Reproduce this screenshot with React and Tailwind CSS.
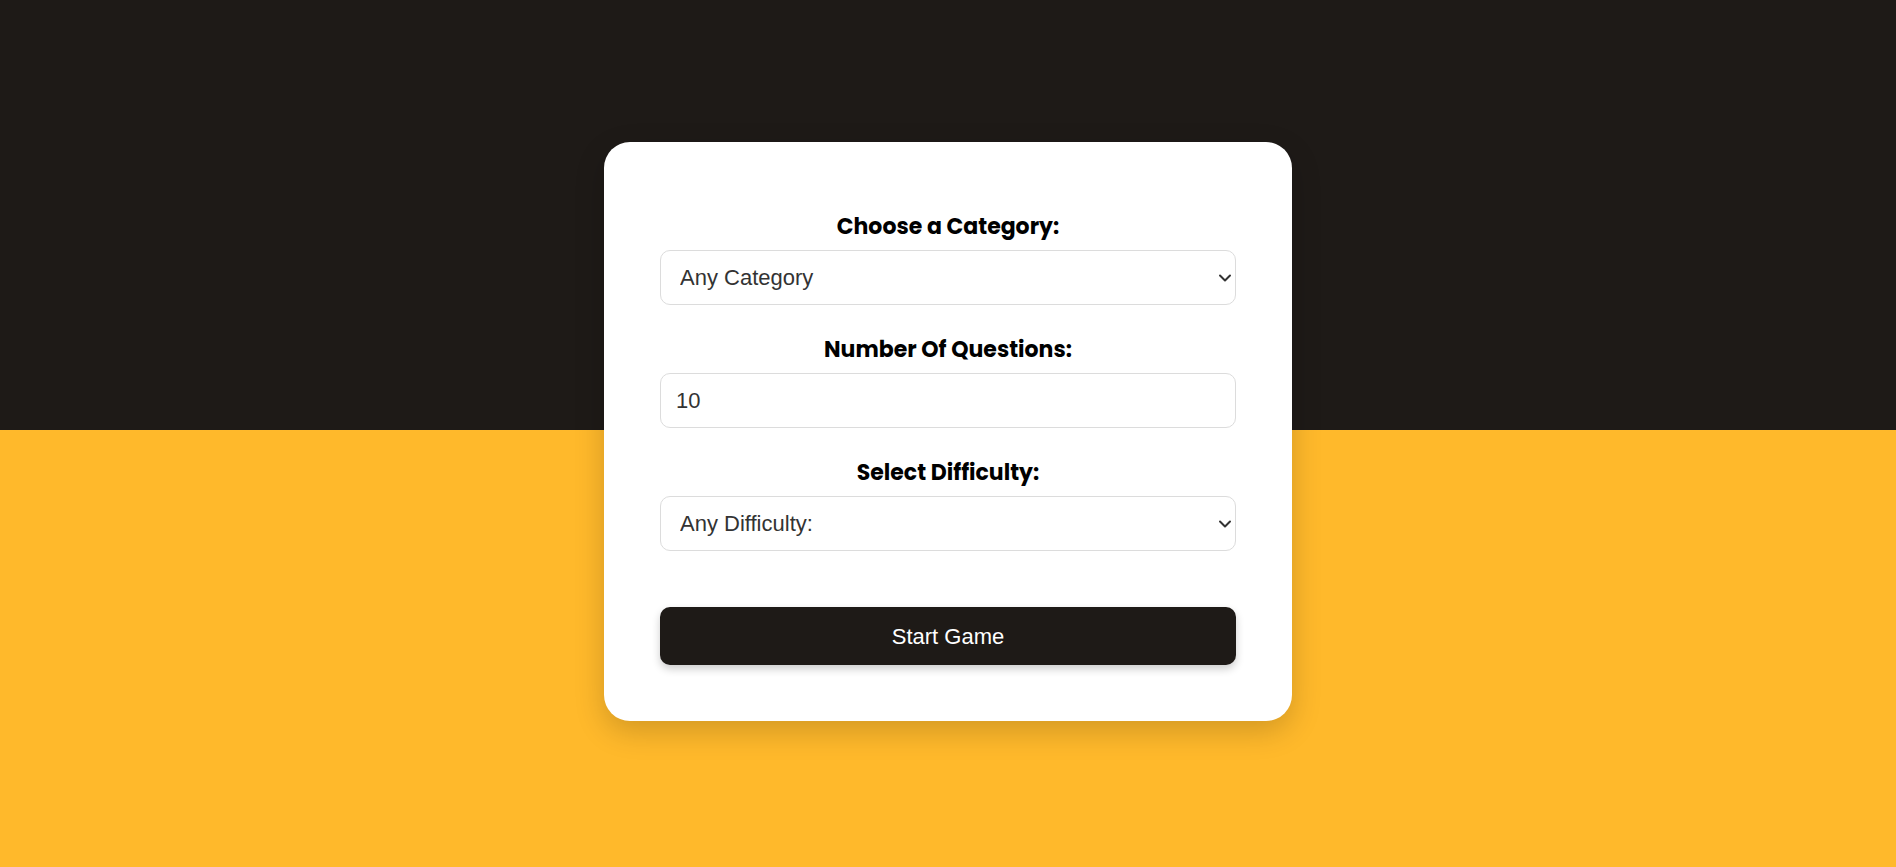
import { useState } from 'react';

const fieldClass =
  'w-full h-[55px] border border-[#dcdcdc] rounded-[10px] bg-white text-[22px] text-[#333] outline-none';

const labelClass =
  "block text-center text-[22px] leading-[30px] font-bold text-black font-['Poppins','Inter',sans-serif]";

// Select with a custom chevron drawn over its right edge
const Select = ({ value, onChange, children }) => (
  <div className="relative">
    <select
      value={value}
      onChange={onChange}
      className={`${fieldClass} appearance-none pl-[19px] pr-6`}
    >
      {children}
    </select>
    <svg
      className="pointer-events-none absolute right-[4px] top-1/2 -translate-y-1/2"
      width="14"
      height="9"
      viewBox="0 0 14 9"
      fill="none"
    >
      <path d="M2 2l5 5 5-5" stroke="#333" strokeWidth="2" strokeLinecap="round" strokeLinejoin="round" />
    </svg>
  </div>
);

const App = () => {
  const [category, setCategory] = useState('any');
  const [amount, setAmount] = useState(10);
  const [difficulty, setDifficulty] = useState('any');

  return (
    <div
      className="min-h-screen flex items-center justify-center bg-[linear-gradient(to_bottom,#1e1a17_0,#1e1a17_49.6%,#ffb92b_49.6%,#ffb92b_100%)]"
      style={{ fontFamily: '"Liberation Sans", Arial, sans-serif' }}
    >
      <form
        className="w-[688px] -mt-1 bg-white rounded-[26px] px-14 pt-[70px] pb-14 shadow-[0_10px_30px_rgba(0,0,0,0.18)]"
        onSubmit={(e) => e.preventDefault()}
      >
        {/* Category */}
        <label className={`${labelClass} mb-2`}>Choose a Category:</label>
        <Select value={category} onChange={(e) => setCategory(e.target.value)}>
          <option value="any">Any Category</option>
          <option value="9">General Knowledge</option>
          <option value="17">Science &amp; Nature</option>
        </Select>

        {/* Amount */}
        <label className={`${labelClass} mt-[30px] mb-2`}>Number Of Questions:</label>
        <input
          type="text"
          value={amount}
          onChange={(e) => setAmount(e.target.value)}
          className={`${fieldClass} px-[15px]`}
        />

        {/* Difficulty */}
        <label className={`${labelClass} mt-[30px] mb-2`}>Select Difficulty:</label>
        <Select value={difficulty} onChange={(e) => setDifficulty(e.target.value)}>
          <option value="any">Any Difficulty:</option>
          <option value="easy">Easy</option>
          <option value="medium">Medium</option>
          <option value="hard">Hard</option>
        </Select>

        <button
          type="submit"
          className="mt-14 w-full h-[58px] rounded-[10px] bg-[#1e1a17] text-white text-[22px] shadow-[0_4px_8px_rgba(0,0,0,0.2)]"
        >
          Start Game
        </button>
      </form>
    </div>
  );
};

export default App;
